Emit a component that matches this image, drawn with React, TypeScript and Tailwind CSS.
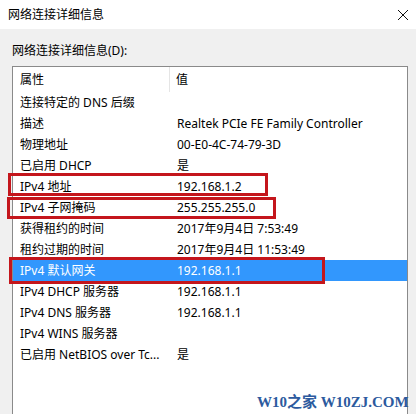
import React from "react";

const rows: [string, string][] = [
  ["连接特定的 DNS 后缀", ""],
  ["描述", "Realtek PCIe FE Family Controller"],
  ["物理地址", "00-E0-4C-74-79-3D"],
  ["已启用 DHCP", "是"],
  ["IPv4 地址", "192.168.1.2"],
  ["IPv4 子网掩码", "255.255.255.0"],
  ["获得租约的时间", "2017年9月4日 7:53:49"],
  ["租约过期的时间", "2017年9月4日 11:53:49"],
  ["IPv4 默认网关", "192.168.1.1"],
  ["IPv4 DHCP 服务器", "192.168.1.1"],
  ["IPv4 DNS 服务器", "192.168.1.1"],
  ["IPv4 WINS 服务器", ""],
  ["已启用 NetBIOS over Tc...", "是"],
];

export default function App() {
  return (
    <div
      className="relative w-[416px] h-[414px] overflow-hidden bg-[#f0f0f0] text-[12px] text-black"
      style={{ fontFamily: '"Noto Sans", "Noto Sans CJK SC", sans-serif' }}
    >
      <div className="h-[29px] bg-white flex items-center justify-between pl-[8px] pr-[6px]">
        <span className="leading-none">网络连接详细信息</span>
        <svg width="12" height="12" viewBox="0 0 12 12" className="mr-[1px]">
          <path d="M1 1 L11 11 M11 1 L1 11" stroke="#111" strokeWidth="1" />
        </svg>
      </div>
      <div className="pl-[12px] pt-[16px] h-[37px] leading-none">网络连接详细信息(D):</div>
      <div className="ml-[12px] w-[396px] h-[400px] bg-white border border-[#8a8a8a]">
        <div className="flex h-[25px] items-center">
          <div className="w-[157px] pl-[7px] h-full flex items-center border-r border-[#e5e5e5]">属性</div>
          <div className="pl-[6px]">值</div>
        </div>
        {rows.map(([k, v], i) => (
          <div
            key={i}
            className={
              "flex h-[21px] items-center " +
              (i === 8 ? "bg-[#3297fd] text-white" : "")
            }
          >
            <div className="w-[157px] pl-[7px] whitespace-nowrap">{k}</div>
            <div className="pl-[7px] whitespace-nowrap">{v}</div>
          </div>
        ))}
      </div>
      <div className="absolute left-[8px] top-[173px] w-[260px] h-[23px] border-[3px] border-[#c4161c]" />
      <div className="absolute left-[7px] top-[197px] w-[269px] h-[22px] border-[3px] border-[#c4161c]" />
      <div className="absolute left-[9px] top-[257px] w-[316px] h-[27px] border-[3px] border-[#c4161c]" />
      <div
        className="absolute left-[257px] top-[395px] text-[15px] font-bold leading-none text-[#2c5a9e] whitespace-nowrap"
        style={{ fontFamily: '"Liberation Serif", "Noto Sans CJK SC", serif' }}
      >
        W10之家 W10ZJ.COM
      </div>
    </div>
  );
}
